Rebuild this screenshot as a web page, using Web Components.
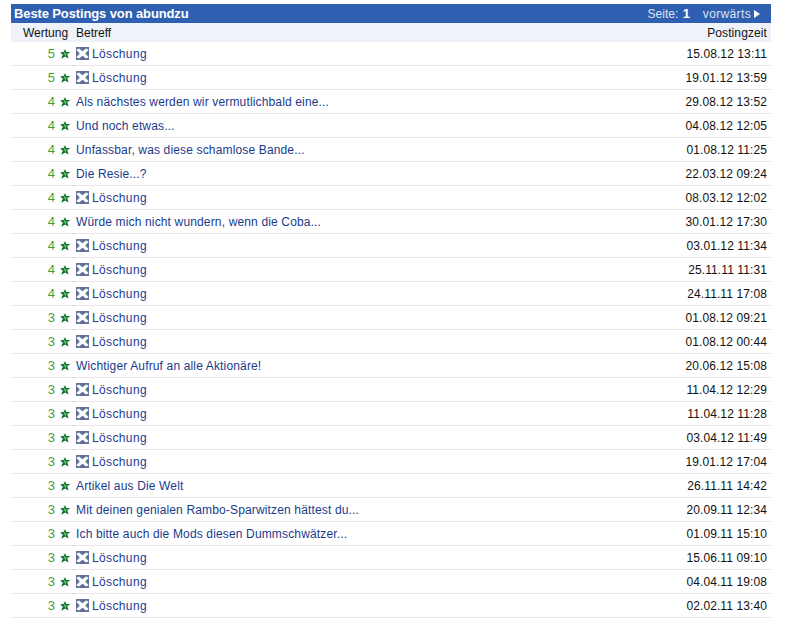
<!DOCTYPE html>
<html lang="de">
<head>
<meta charset="utf-8">
<title>Beste Postings</title>
<style>
	body {
		margin: 4px 14px 0 11px;
		background: #fff;
		font: 12px "Liberation Sans", Arial, sans-serif;
	}
</style>
</head>
<body>
<posting-list heading="Beste Postings von abundzu" page="1"></posting-list>
<script>
(() => {
	// ======
	// Icons.
	// ======

	const starIcon = `
		<svg width="10" height="10" viewBox="0 0 10 10" aria-hidden="true">
			<path d="M5 0 6.2 3.1 10 3.2 7.2 5.5 8.6 9.6 5 7.4 1.4 9.8 2.7 5.6 0 3.4 3.8 3.1Z" fill="#0c6b27"/>
			<path d="M4.6 2.8 5.6 4.4 7.8 4.3 6 5.4 5.8 7 4.6 6 3.2 6.6 3.8 5.1Z" fill="#6fd07a"/>
			<path d="M4.8 4.2 5.4 5 4.8 5.6 4.2 5Z" fill="#1c8a3a"/>
		</svg>
	`;

	const deletedIcon = `
		<svg width="13" height="13" viewBox="0 0 13 13" aria-hidden="true">
			<rect width="13" height="13" fill="#5f7199"/>
			<path d="M.3 2.8 3 1.4 6.5 4.2 10 1.4 12.7 2.8 9.3 6.5 12.7 10.2 10 11.6 6.5 8.8 3 11.6.3 10.2 3.7 6.5Z" fill="#fff"/>
		</svg>
	`;

	// ============
	// Posting row.
	// ============

	class PostingRow extends HTMLElement {
		constructor() {
			super();
			this.attachShadow({ mode: 'open' });
		}

		connectedCallback() {
			const deleted = this.hasAttribute('deleted');

			this.shadowRoot.innerHTML = `
				<style>
					:host {
						display: grid;
						grid-template-columns: 65px 1fr auto;
						align-items: center;
						height: 23px;
						border-bottom: 1px solid #e6e6e6;
					}
					.score {
						display: flex;
						align-items: center;
						justify-content: flex-end;
						gap: 5px;
						padding-right: 6px;
						color: #3f9f3f;
						font-size: 13px;
					}
					.subject {
						display: flex;
						align-items: center;
						gap: 3px;
						color: #1a3a8c;
						letter-spacing: ${deleted ? '.37px' : '.15px'};
					}
					svg { display: block; }
					.time {
						padding-right: 4px;
						color: #111;
						letter-spacing: .1px;
					}
				</style>
				<div class="score">${this.getAttribute('score')}${starIcon}</div>
				<div class="subject">${deleted ? deletedIcon : ''}<slot></slot></div>
				<div class="time">${this.getAttribute('time')}</div>
			`;
		}
	}

	// =============
	// Posting list.
	// =============

	class PostingList extends HTMLElement {
		constructor() {
			super();
			this.attachShadow({ mode: 'open' });
		}

		connectedCallback() {
			this.shadowRoot.innerHTML = `
				<style>
					:host {
						display: block;
						width: 760px;
					}
					.bar {
						display: flex;
						align-items: center;
						height: 19px;
						padding: 0 11px 0 3px;
						background: #2f5fb0;
						color: #fff;
					}
					.title {
						flex: 1;
						font-weight: bold;
						font-size: 13px;
						letter-spacing: -.12px;
					}
					.pager { color: #dbe6f7; }
					.pager b { color: #fff; margin: 0 13px 0 1px; font-size: 13px; }
					.forward { letter-spacing: .35px; }
					.next {
						display: inline-block;
						width: 0;
						height: 0;
						margin-left: 3px;
						border-left: 6px solid #fff;
						border-top: 4px solid transparent;
						border-bottom: 4px solid transparent;
					}
					.head {
						display: grid;
						grid-template-columns: 65px 1fr auto;
						align-items: center;
						height: 19px;
						background: #eef3fa;
						color: #111;
					}
					.head .rate { padding-left: 12px; }
					.head .time { padding-right: 4px; letter-spacing: .1px; }
					.rows { display: block; }
				</style>
				<div class="bar">
					<span class="title">${this.getAttribute('heading')}</span>
					<span class="pager">Seite: <b>${this.getAttribute('page')}</b><span class="forward">vorwärts</span><i class="next"></i></span>
				</div>
				<div class="head">
					<span class="rate">Wertung</span>
					<span>Betreff</span>
					<span class="time">Postingzeit</span>
				</div>
				<div class="rows"><slot></slot></div>
			`;
		}
	}

	// =====
	// Data.
	// =====

	const postings = [
		[5, null, '15.08.12 13:11'],
		[5, null, '19.01.12 13:59'],
		[4, 'Als nächstes werden wir vermutlichbald eine...', '29.08.12 13:52'],
		[4, 'Und noch etwas...', '04.08.12 12:05'],
		[4, 'Unfassbar, was diese schamlose Bande...', '01.08.12 11:25'],
		[4, 'Die Resie...?', '22.03.12 09:24'],
		[4, null, '08.03.12 12:02'],
		[4, 'Würde mich nicht wundern, wenn die Coba...', '30.01.12 17:30'],
		[4, null, '03.01.12 11:34'],
		[4, null, '25.11.11 11:31'],
		[4, null, '24.11.11 17:08'],
		[3, null, '01.08.12 09:21'],
		[3, null, '01.08.12 00:44'],
		[3, 'Wichtiger Aufruf an alle Aktionäre!', '20.06.12 15:08'],
		[3, null, '11.04.12 12:29'],
		[3, null, '11.04.12 11:28'],
		[3, null, '03.04.12 11:49'],
		[3, null, '19.01.12 17:04'],
		[3, 'Artikel aus Die Welt', '26.11.11 14:42'],
		[3, 'Mit deinen genialen Rambo-Sparwitzen hättest du...', '20.09.11 12:34'],
		[3, 'Ich bitte auch die Mods diesen Dummschwätzer...', '01.09.11 15:10'],
		[3, null, '15.06.11 09:10'],
		[3, null, '04.04.11 19:08'],
		[3, null, '02.02.11 13:40'],
	];

	// ================
	// Define elements.
	// ================

	customElements.define('posting-row', PostingRow);
	customElements.define('posting-list', PostingList);

	const list = document.querySelector('posting-list');
	postings.forEach(([score, subject, time]) => {
		const row = document.createElement('posting-row');
		row.setAttribute('score', score);
		row.setAttribute('time', time);
		if (!subject) {
			row.setAttribute('deleted', '');
		}
		row.textContent = subject || 'Löschung';
		list.appendChild(row);
	});
})();
</script>
</body>
</html>
